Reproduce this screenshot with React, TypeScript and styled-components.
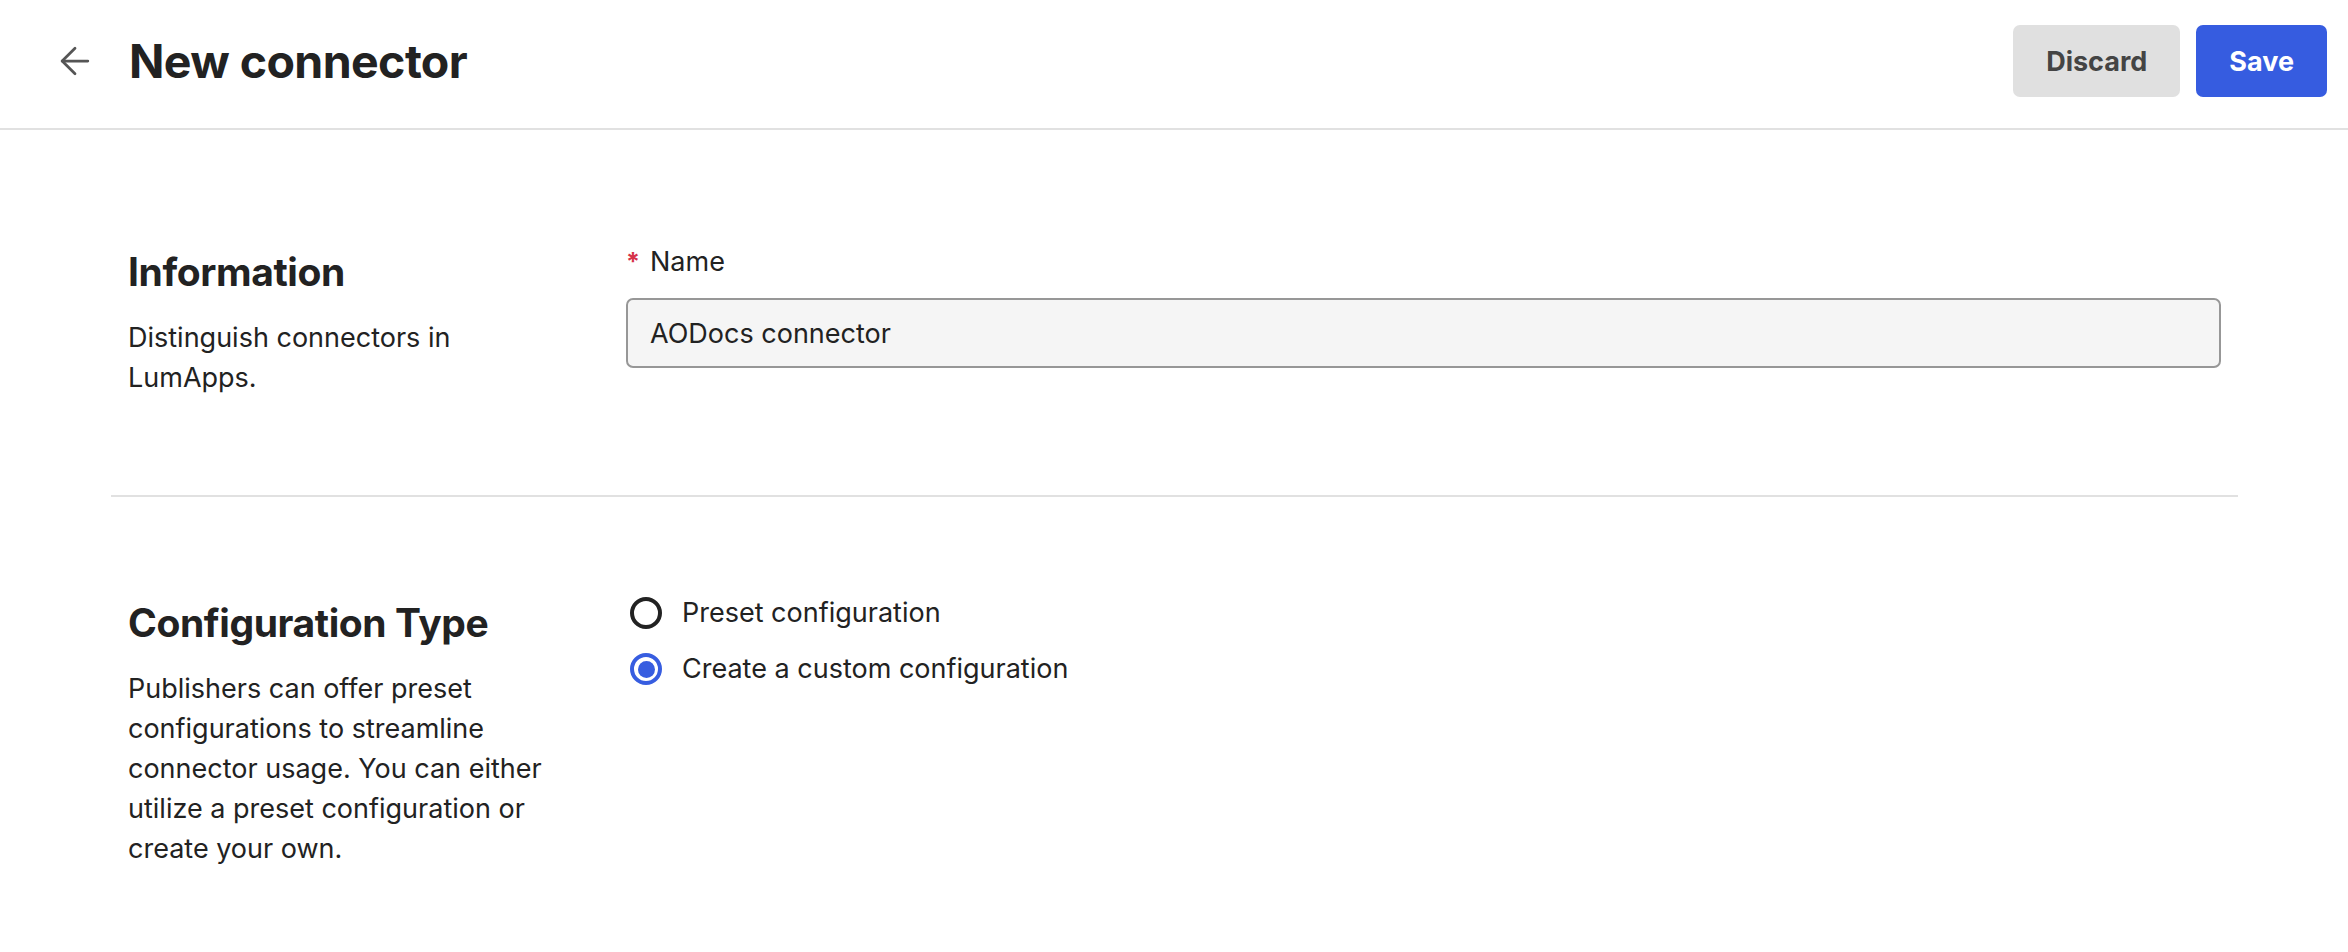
import React, { FC } from "react";
import styled, { createGlobalStyle } from "styled-components";
import { ArrowLeft } from "lucide-react";

const GlobalStyle = createGlobalStyle`
  html, body {
    margin: 0;
    padding: 0;
    background: #fff;
  }

  body {
    font-family: Inter, "Noto Sans", "Liberation Sans", sans-serif;
    color: #222;
    -webkit-font-smoothing: antialiased;
  }

  * {
    box-sizing: border-box;
  }
`;

const Page = styled.div`
  width: 100%;
  min-height: 100vh;
  background: #fff;
`;

const Header = styled.header`
  display: flex;
  align-items: center;
  height: 130px;
  padding: 0 21px 6px 53px;
  border-bottom: 2px solid #e1e1e1;
`;

const BackButton = styled.button`
  display: flex;
  align-items: center;
  justify-content: center;
  width: 44px;
  height: 44px;
  padding: 0;
  margin-right: 32px;
  border: none;
  background: transparent;
  color: #555;
  cursor: pointer;
`;

const Title = styled.h1`
  margin: 0;
  font-size: 46.5px;
  line-height: 56px;
  font-weight: 700;
  letter-spacing: -0.6px;
  color: #222;
`;

const Actions = styled.div`
  display: flex;
  gap: 16px;
  margin-left: auto;
`;

const Button = styled.button<{ $primary?: boolean }>`
  height: 72px;
  padding: 0 33px;
  border: none;
  border-radius: 7px;
  font-family: inherit;
  font-size: 27px;
  font-weight: 700;
  background: ${(p) => (p.$primary ? "#365ce0" : "#e0e0e0")};
  color: ${(p) => (p.$primary ? "#fff" : "#444")};
  cursor: pointer;
`;

const Main = styled.main`
  padding: 16px 110px 0 111px;
`;

const Section = styled.section<{ $divider?: boolean }>`
  display: grid;
  grid-template-columns: 498px 1fr;
  padding: 96px 17px 97px;
  border-bottom: ${(p) => (p.$divider ? "2px solid #e1e1e1" : "none")};
`;

const Aside = styled.div`
  display: flex;
  flex-direction: column;
`;

const SectionTitle = styled.h2`
  margin: 0 0 16px;
  font-size: 39px;
  line-height: 60px;
  font-weight: 700;
  letter-spacing: -0.4px;
  color: #222;
`;

const SectionText = styled.p`
  margin: 0;
  max-width: 430px;
  font-size: 27px;
  line-height: 40px;
  color: #222;
`;

const Fields = styled.div`
  display: flex;
  flex-direction: column;
`;

const Label = styled.label`
  display: flex;
  align-items: center;
  gap: 10px;
  font-size: 27px;
  line-height: 40px;
  color: #222;
  margin-bottom: 16px;
`;

const Required = styled.span`
  color: #d6334a;
  font-size: 25px;
  font-weight: 700;
`;

const TextInput = styled.input`
  width: 100%;
  height: 70px;
  padding: 0 22px;
  border: 2px solid #979797;
  border-radius: 7px;
  background: #f5f5f5;
  font-family: inherit;
  font-size: 27px;
  color: #222;
  outline: none;
`;

const RadioGroup = styled.div`
  display: flex;
  flex-direction: column;
  gap: 16px;
`;

const RadioRow = styled.label`
  display: flex;
  align-items: center;
  gap: 20px;
  font-size: 27px;
  line-height: 40px;
  color: #222;
  cursor: pointer;
`;

const RadioCircle = styled.span<{ $checked?: boolean }>`
  position: relative;
  flex: none;
  width: 32px;
  height: 32px;
  margin-left: 4px;
  border-radius: 50%;
  border: 4px solid ${(p) => (p.$checked ? "#375de0" : "#222")};

  &::after {
    content: "";
    display: ${(p) => (p.$checked ? "block" : "none")};
    position: absolute;
    inset: 3.5px;
    border-radius: 50%;
    background: #375de0;
  }
`;

interface RadioProps {
  label: string;
  checked?: boolean;
}

const Radio: FC<RadioProps> = ({ label, checked }) => (
  <RadioRow>
    <RadioCircle $checked={checked} />
    {label}
  </RadioRow>
);

const App: FC = () => {
  return (
    <Page>
      <GlobalStyle />
      <Header>
        <BackButton aria-label="Back">
          <ArrowLeft size={44} strokeWidth={1.5} />
        </BackButton>
        <Title>New connector</Title>
        <Actions>
          <Button>Discard</Button>
          <Button $primary>Save</Button>
        </Actions>
      </Header>

      <Main>
        <Section $divider>
          <Aside>
            <SectionTitle>Information</SectionTitle>
            <SectionText>Distinguish connectors in LumApps.</SectionText>
          </Aside>
          <Fields>
            <Label>
              <Required>*</Required>
              Name
            </Label>
            <TextInput readOnly value="AODocs connector" />
          </Fields>
        </Section>

        <Section>
          <Aside>
            <SectionTitle>Configuration Type</SectionTitle>
            <SectionText>
              Publishers can offer preset configurations to streamline
              connector usage. You can either utilize a preset configuration
              or create your own.
            </SectionText>
          </Aside>
          <RadioGroup>
            <Radio label="Preset configuration" />
            <Radio label="Create a custom configuration" checked />
          </RadioGroup>
        </Section>
      </Main>
    </Page>
  );
};

export default App;
